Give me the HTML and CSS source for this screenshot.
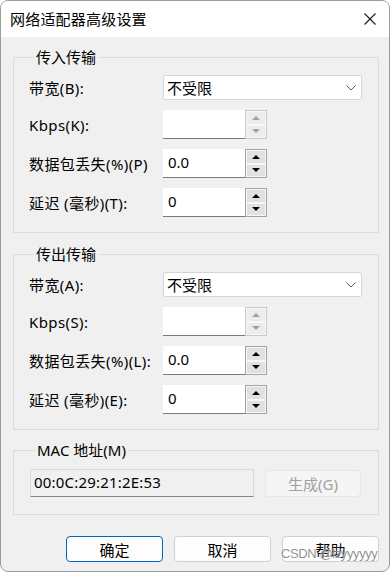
FILE: index.html
```html
<!DOCTYPE html>
<html>

<head>
  <meta charset="utf-8">
  <title>网络适配器高级设置</title>
  <link rel="stylesheet" href="styles.css">
</head>

<body>
  <div class="window">

    <div class="titlebar">
      <span class="title">网络适配器高级设置</span>
      <span class="close">
        <svg width="12" height="12" viewBox="0 0 12 12">
          <path d="M0.5 0.5 L11.5 11.5 M11.5 0.5 L0.5 11.5" stroke="#1a1a1a" stroke-width="1.1" fill="none" />
        </svg>
      </span>
    </div>

    <div class="content">

      <fieldset class="group">
        <legend>传入传输</legend>
        <div class="rows">
          <label>带宽(B):</label>
          <div class="select">
            <span>不受限</span>
            <svg width="10" height="6" viewBox="0 0 10 6">
              <path d="M0.5 0.5 L5 5 L9.5 0.5" stroke="#5c5c5c" stroke-width="1" fill="none" />
            </svg>
          </div>

          <label>Kbps(K):</label>
          <div class="spin disabled">
            <div class="field"></div>
            <div class="arrows"><span class="up"></span><span class="down"></span></div>
          </div>

          <label>数据包丢失(%)(P)</label>
          <div class="spin">
            <div class="field">0.0</div>
            <div class="arrows"><span class="up"></span><span class="down"></span></div>
          </div>

          <label>延迟 (毫秒)(T):</label>
          <div class="spin">
            <div class="field">0</div>
            <div class="arrows"><span class="up"></span><span class="down"></span></div>
          </div>
        </div>
      </fieldset>

      <fieldset class="group">
        <legend>传出传输</legend>
        <div class="rows">
          <label>带宽(A):</label>
          <div class="select">
            <span>不受限</span>
            <svg width="10" height="6" viewBox="0 0 10 6">
              <path d="M0.5 0.5 L5 5 L9.5 0.5" stroke="#5c5c5c" stroke-width="1" fill="none" />
            </svg>
          </div>

          <label>Kbps(S):</label>
          <div class="spin disabled">
            <div class="field"></div>
            <div class="arrows"><span class="up"></span><span class="down"></span></div>
          </div>

          <label>数据包丢失(%)(L):</label>
          <div class="spin">
            <div class="field">0.0</div>
            <div class="arrows"><span class="up"></span><span class="down"></span></div>
          </div>

          <label>延迟 (毫秒)(E):</label>
          <div class="spin">
            <div class="field">0</div>
            <div class="arrows"><span class="up"></span><span class="down"></span></div>
          </div>
        </div>
      </fieldset>

      <fieldset class="group mac">
        <legend>MAC 地址(M)</legend>
        <div class="mac_row">
          <div class="mac_field">00:0C:29:21:2E:53</div>
          <button class="btn" disabled>生成(G)</button>
        </div>
      </fieldset>

      <div class="buttons">
        <button class="btn default">确定</button>
        <button class="btn">取消</button>
        <button class="btn">帮助</button>
      </div>

    </div>

    <div class="watermark">CSDN @lzyyyyyy</div>
  </div>
</body>

</html>
```

FILE: styles.css
```css
body {
  margin: 0;
  background-color: #fff;
  font-family: "Noto Sans", "Noto Sans CJK SC", sans-serif;
  font-size: 15px;
  color: #000;
}

.window {
  position: relative;
  width: 390px;
  height: 572px;
  box-sizing: border-box;
  border: 1px solid #9c9c9c;
  border-radius: 8px;
  overflow: hidden;
  background-color: #f0f0f0;
  display: flex;
  flex-direction: column;
}

.titlebar {
  height: 36px;
  background-color: #fff;
  display: flex;
  align-items: center;
  padding-left: 9px;
}

.title {
  line-height: 20px;
  letter-spacing: 0.2px;
}

.close {
  margin-left: auto;
  margin-right: 13px;
  display: flex;
}

.content {
  padding: 0 10px 0 12px;
}

.group {
  margin: 11px 0 0 0;
  padding: 9px 16px 15px 15px;
  border: 1px solid #dcdcdc;
  min-width: 0;
}

.group+.group {
  margin-top: 12px;
}

.group legend {
  padding: 0 2px;
  margin-left: 5px;
  line-height: 18px;
}

.rows {
  display: grid;
  grid-template-columns: 134px 1fr;
  row-gap: 10px;
  align-items: center;
}

.rows label {
  line-height: 20px;
  white-space: nowrap;
  letter-spacing: 0.4px;
}

.select {
  height: 25px;
  box-sizing: border-box;
  background-color: #fff;
  border: 1px solid #d5d5d5;
  border-radius: 2px;
  display: flex;
  align-items: center;
  justify-content: space-between;
  padding: 0 5px 0 3px;
  line-height: 20px;
}

.spin {
  display: flex;
  height: 29px;
}

.spin .field {
  width: 82px;
  box-sizing: border-box;
  background-color: #fff;
  border-bottom: 1px solid #7a7a7a;
  padding-left: 5px;
  line-height: 26px;
}

.spin .arrows {
  width: 22px;
  box-sizing: border-box;
  border: 1px solid #a3a3a3;
  background-color: #f7f7f7;
  padding: 1px;
  display: flex;
  flex-direction: column;
  gap: 2px;
}

.spin .arrows span {
  flex: 1;
  background-color: #e1e1e1;
  display: flex;
  align-items: center;
  justify-content: center;
}

.spin .arrows span:after {
  content: "";
  border-left: 4px solid transparent;
  border-right: 4px solid transparent;
}

.spin .arrows .up:after {
  border-bottom: 4px solid #000;
}

.spin .arrows .down:after {
  border-top: 4px solid #000;
}

.spin.disabled .arrows {
  border-color: #c9c9c9;
}

.spin.disabled .arrows span {
  background-color: #ececec;
}

.spin.disabled .arrows .up:after {
  border-bottom-color: #a0a0a0;
}

.spin.disabled .arrows .down:after {
  border-top-color: #a0a0a0;
}

.group.mac {
  margin-top: 11px;
  padding: 10px 17px 17px 16px;
}

.mac_row {
  display: flex;
  align-items: flex-start;
  gap: 11px;
}

.mac_field {
  width: 224px;
  height: 28px;
  box-sizing: border-box;
  border: 1px solid #d9d9d9;
  border-bottom-color: #868686;
  background-color: #f0f0f0;
  padding-left: 3px;
  line-height: 24px;
  letter-spacing: 0.2px;
}

.btn {
  font-family: inherit;
  font-size: 15px;
  color: #000;
  width: 97px;
  height: 26px;
  padding: 0;
  box-sizing: border-box;
  background-color: #fdfdfd;
  border: 1px solid #d0d0d0;
  border-radius: 4px;
}

.mac_row .btn {
  width: 96px;
  height: 27px;
  margin-top: 1px;
  background-color: #f5f5f5;
  border-color: #e6e6e6;
  color: #a0a0a0;
}

.btn.default {
  border-color: #0067c0;
}

.buttons {
  display: flex;
  justify-content: flex-end;
  gap: 11px;
  margin-top: 21px;
}

.watermark {
  position: absolute;
  left: 280px;
  top: 545px;
  font-family: "Liberation Sans", sans-serif;
  font-size: 13px;
  letter-spacing: -0.4px;
  color: rgba(110, 110, 110, 0.75);
  text-shadow: 0 0 1px #fff;
}
```
